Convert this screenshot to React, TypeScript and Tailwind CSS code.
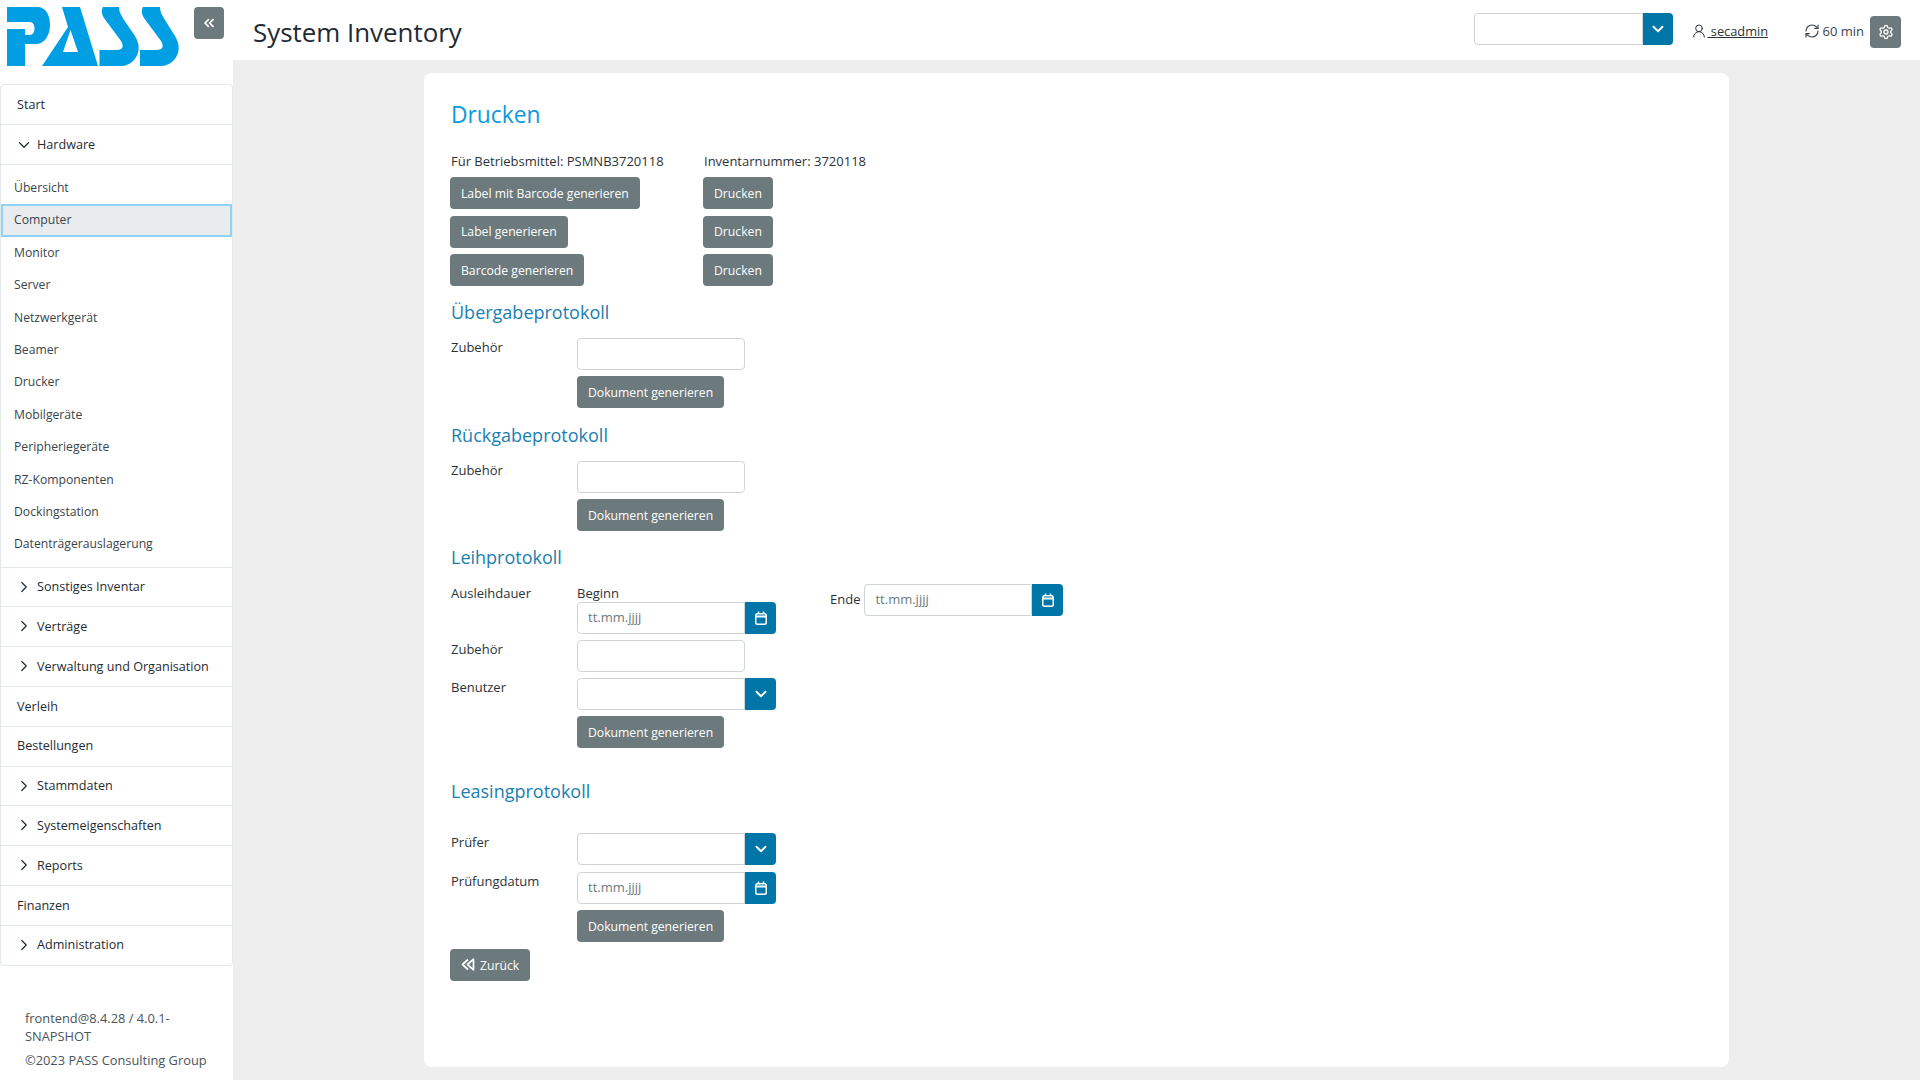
import { ChevronDown, ChevronRight, ChevronsLeft, UserRound, RefreshCw, Settings } from "lucide-react";

const subItems = ["Übersicht", "Computer", "Monitor", "Server", "Netzwerkgerät", "Beamer", "Drucker", "Mobilgeräte", "Peripheriegeräte", "RZ-Komponenten", "Dockingstation", "Datenträgerauslagerung"];
const lowerItems: [string, boolean][] = [
  ["Sonstiges Inventar", true], ["Verträge", true], ["Verwaltung und Organisation", true], ["Verleih", false],
  ["Bestellungen", false], ["Stammdaten", true], ["Systemeigenschaften", true], ["Reports", true], ["Finanzen", false], ["Administration", true],
];

function Logo() {
  return (
    <svg width="180" height="70" viewBox="0 0 180 70" className="block">
      <g fill="#009fe3">
        {/* P */}
        <path fillRule="evenodd" d="M7 7H37C46 7 50 15 50 25C50 36 44 44 36 44H25V66H7V29H25V35H30C33 35 34.500 32 34.500 28.500C34.500 25 33 22 30 22H7Z" />
        {/* A */}
        <path fillRule="evenodd" d="M62 7H80L98 66H42L68 27ZM70.500 30L63 52H78Z" />
        {/* S */}
        <path d="M103 7H119C119 12 121 15 124 20L135 36C141 46 139 54 134 60C130 64 126 66 120 66H99.500V50H117C123 50 124 46 121 41L104 18C101.500 14 101 10 103 7Z" />
        <path d="M143 7H160C160 12 162 15 165 20L175 36C181 46 179 54 174 60C170 64 166 66 160 66H140V50H157C163 50 164 46 161 41L144 18C141.500 14 141 10 143 7Z" />
      </g>
    </svg>
  );
}

function CalendarIcon() {
  return (
    <svg width="14" height="15" viewBox="0 0 14 15" fill="none" stroke="currentColor" strokeWidth="1.5">
      <rect x="1.750" y="2.750" width="10.500" height="10.500" rx="1.750" />
      <path d="M2 5.500H12" strokeWidth="2" />
      <path d="M4.500 0.500V3M9.500 0.500V3" />
    </svg>
  );
}

function RewindIcon() {
  return (
    <svg width="14" height="13" viewBox="0 0 14 13" fill="none" stroke="currentColor" strokeWidth="1.7" strokeLinejoin="round">
      <path d="M7 1.500L1.500 6.500L7 11.500" />
      <path d="M12.500 1.200L6.500 6.500L12.500 11.800Z" />
    </svg>
  );
}

function GrayBtn({ children, className = "" }: { children: React.ReactNode; className?: string }) {
  return <div className={`h-8 px-[11px] pt-[2px] inline-flex items-center rounded bg-[#6c7a7d] text-white text-[12.2px] w-fit ${className}`}>{children}</div>;
}

function TextBox({ rounded = "rounded", children }: { rounded?: string; children?: React.ReactNode }) {
  return <div className={`w-[168px] h-8 border border-[#ced4da] bg-white pl-[10px] flex items-center text-[13px] text-[#6c7a7d] ${rounded}`}>{children}</div>;
}

function AddonField({ icon, text }: { icon: "date" | "select"; text?: string }) {
  return (
    <div className="flex">
      <TextBox rounded="rounded-l">{text}</TextBox>
      <div className="w-[31px] h-8 bg-[#0076a8] rounded-r flex items-center justify-center text-white">
        {icon === "date" ? <CalendarIcon /> : <ChevronDown size={18} strokeWidth={2.5} />}
      </div>
    </div>
  );
}

function FormRow({ label, children, className = "" }: { label?: string; children: React.ReactNode; className?: string }) {
  return (
    <div className={`flex ${className}`}>
      <div className="w-[127px] text-[13px] leading-[18px] pl-[1px] shrink-0">{label}</div>
      {children}
    </div>
  );
}

function Section({ children, className = "" }: { children: React.ReactNode; className?: string }) {
  return <h2 className={`text-[18px] leading-[26px] pl-[1px] text-[#1a7fb0] ${className}`}>{children}</h2>;
}

export default function App() {
  return (
    <div className="flex w-[1920px] h-[1080px] overflow-hidden bg-white text-[#2b3338] font-['Open_Sans',sans-serif]">
      {/* sidebar */}
      <aside className="w-[233px] shrink-0 flex flex-col bg-white">
        <div className="h-[84px] relative">
          <Logo />
          <div className="absolute left-[194px] top-[7px] w-[30px] h-8 rounded bg-[#6c7a7d] flex items-center justify-center text-white">
            <ChevronsLeft size={16} strokeWidth={2.5} />
          </div>
        </div>
        <nav className="border border-[#e3e8e8] rounded-[4px] text-[12.6px] font-medium text-[#1f2b33]">
          <div className="h-[39px] pt-[2px] flex items-center pl-[16px]">Start</div>
          <div className="h-10 pt-[2px] border-t border-[#e3e8e8] flex items-center pl-[14px] gap-[4px]">
            <ChevronDown size={18} strokeWidth={1.6} className="-mt-[2px]" />
            Hardware
          </div>
          <div className="border-t border-[#e3e8e8] pt-[7px] pb-[6px] font-normal text-[#3a454b] text-[12.2px]">
            {subItems.map((s) =>
              s === "Computer" ? (
                <div key={s} className="h-[32.4px] flex items-center pl-[11px] bg-[#e9ecef] border-2 border-[#8fd3f8]">{s}</div>
              ) : (
                <div key={s} className="h-[32.4px] flex items-center pl-[13px]">{s}</div>
              )
            )}
          </div>
          {lowerItems.map(([name, chev]) => (
            <div key={name} className="h-[39.8px] pt-[1px] border-t border-[#e3e8e8] flex items-center pl-[15px]">
              {chev && <ChevronRight size={18} strokeWidth={1.6} className="-ml-[1px] mr-[4px] -translate-y-[1px]" />}
              <span className={chev ? "" : "ml-[1px]"}>{name}</span>
            </div>
          ))}
        </nav>
        <div className="mt-[43px] px-[25px] text-[12.85px] text-[#4a5459]">
          <p className="leading-[18px] w-[175px]">frontend@8.4.28 / 4.0.1-SNAPSHOT</p>
          <p className="mt-[6px] leading-[18px] whitespace-nowrap">©2023 PASS Consulting Group</p>
        </div>
      </aside>

      <div className="flex-1 flex flex-col min-w-0">
        {/* header */}
        <header className="h-[60px] shrink-0 flex items-center bg-white pl-[20px] pr-[19px]">
          <h1 className="text-[25.9px] text-[#1f2b33] pt-[4px]">System Inventory</h1>
          <div className="ml-auto flex -translate-y-[1px]">
            <div className="w-[169px] h-8 border border-[#ced4da] rounded-l bg-white" />
            <div className="w-[30px] h-8 bg-[#0076a8] rounded-r flex items-center justify-center text-white">
              <ChevronDown size={18} strokeWidth={2.5} />
            </div>
          </div>
          <div className="ml-[18px] w-[90px] flex items-center text-[12.8px] underline pt-[4px]">
            <UserRound size={16} strokeWidth={1.5} className="-mt-[2px]" />
            <span>&nbsp;secadmin</span>
          </div>
          <div className="ml-[23px] flex items-center text-[13px] text-[#3a454b] pt-[3px]">
            <RefreshCw size={16} strokeWidth={1.7} className="mr-[2px] -mt-[2px]" />
            60 min
          </div>
          <div className="ml-[6px] w-[31px] h-8 rounded bg-[#6c7a7d] flex items-center justify-center text-white translate-y-[2px]">
            <Settings size={16} strokeWidth={2} />
          </div>
        </header>

        {/* main */}
        <main className="flex-1 bg-[#eeeeee] pl-[191px] pt-[13px] pr-[191px] pb-[13px]">
          <div className="h-full bg-white rounded-lg pl-[26px] pt-[25px]">
            <h1 className="text-[22.8px] leading-[34px] pl-[1px] text-[#0a9ade]">Drucken</h1>

            <div className="mt-[20px] flex text-[13px] leading-[18px]">
              <div className="w-[253px] pl-[1px]">Für Betriebsmittel: PSMNB3720118</div>
              <div className="pl-[1px]">Inventarnummer: 3720118</div>
            </div>

            <div className="mt-[7px] flex flex-col gap-[6.5px]">
              {["Label mit Barcode generieren", "Label generieren", "Barcode generieren"].map((t) => (
                <div key={t} className="flex">
                  <div className="w-[253px]"><GrayBtn>{t}</GrayBtn></div>
                  <GrayBtn>Drucken</GrayBtn>
                </div>
              ))}
            </div>

            <Section className="mt-[13px]">Übergabeprotokoll</Section>
            <FormRow label="Zubehör" className="mt-[13px]"><TextBox /></FormRow>
            <FormRow className="mt-[6px]"><GrayBtn>Dokument generieren</GrayBtn></FormRow>

            <Section className="mt-[14px]">Rückgabeprotokoll</Section>
            <FormRow label="Zubehör" className="mt-[13px]"><TextBox /></FormRow>
            <FormRow className="mt-[6px]"><GrayBtn>Dokument generieren</GrayBtn></FormRow>

            <Section className="mt-[13px]">Leihprotokoll</Section>
            <FormRow label="Ausleihdauer" className="mt-[14px]">
              <div>
                <div className="text-[13px] leading-[18px]">Beginn</div>
                <AddonField icon="date" text="tt.mm.jjjj" />
              </div>
              <div className="ml-[54px] flex gap-[4px] items-start">
                <span className="text-[13px] leading-[18px] pt-[6px]">Ende</span>
                <AddonField icon="date" text="tt.mm.jjjj" />
              </div>
            </FormRow>
            <FormRow label="Zubehör" className="mt-[6px]"><TextBox /></FormRow>
            <FormRow label="Benutzer" className="mt-[6px]"><AddonField icon="select" /></FormRow>
            <FormRow className="mt-[6px]"><GrayBtn>Dokument generieren</GrayBtn></FormRow>

            <Section className="mt-[30px]">Leasingprotokoll</Section>
            <FormRow label="Prüfer" className="mt-[29px]"><AddonField icon="select" /></FormRow>
            <FormRow label="Prüfungdatum" className="mt-[7px]"><AddonField icon="date" text="tt.mm.jjjj" /></FormRow>
            <FormRow className="mt-[6px]"><GrayBtn>Dokument generieren</GrayBtn></FormRow>
            <GrayBtn className="mt-[7px]">
              <span className="mr-[5px] -mt-[3px]"><RewindIcon /></span>
              Zurück
            </GrayBtn>
          </div>
        </main>
      </div>
    </div>
  );
}
